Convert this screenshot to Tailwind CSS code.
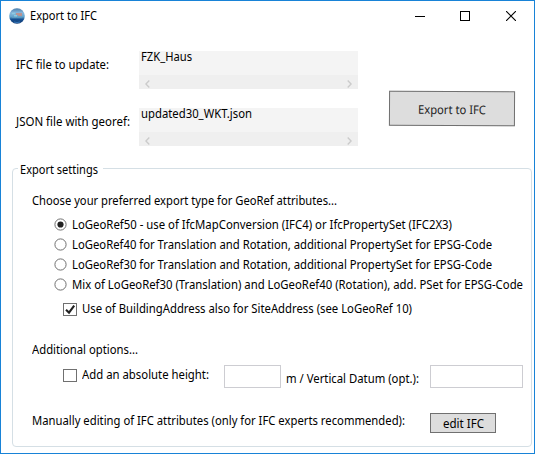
<!DOCTYPE html>
<html lang="en">
<head>
<meta charset="utf-8">
<title>Export to IFC</title>
<script src="https://cdn.jsdelivr.net/npm/@tailwindcss/browser@4"></script>
</head>
<body class="bg-white">
<div class="flex h-[454px] w-[535px] flex-col overflow-hidden border border-[#1883d7] bg-white font-['Noto_Sans','Open_Sans',sans-serif] text-[12px] leading-4 whitespace-nowrap text-black">
  <header class="flex h-[30px] shrink-0 items-center pl-2">
    <svg class="h-4 w-4" viewBox="0 0 16 16">
      <defs>
        <linearGradient id="globe" x1="0" y1="0" x2="0" y2="1"><stop offset="0" stop-color="#487cab"/><stop offset=".3" stop-color="#88b8dc"/><stop offset=".55" stop-color="#63a4cc"/><stop offset=".72" stop-color="#154f91"/><stop offset="1" stop-color="#143b72"/></linearGradient>
      </defs>
      <circle cx="8" cy="8" r="7.8" fill="url(#globe)"/>
      <path d="M3 5.5h3M5 7.8h3" stroke="#8ecbe0" stroke-width="1.5"/>
      <path d="M7 5h6v3H9v-1H7z" fill="#c58d85" opacity=".85"/>
      <path d="M3 9.2q4 .8 10-.3" stroke="#5f9fc4" fill="none"/>
      <path d="M5 14q3 1 6 0" stroke="#3678bb" fill="none"/>
    </svg>
    <div class="ml-[5px] w-[68px]"><span data-w="67" class="inline-block shrink-0 origin-left">Export to IFC</span></div>
    <svg class="ml-[317px] h-[10px] w-[10px]" viewBox="0 0 10 10" shape-rendering="crispEdges"><path d="M0 5.5h10" stroke="#000"/></svg>
    <svg class="ml-[35px] h-[10px] w-[10px]" viewBox="0 0 10 10" shape-rendering="crispEdges"><path d="M.5.5h9v9h-9z" fill="none" stroke="#000"/></svg>
    <svg class="ml-9 h-[10px] w-[10px]" viewBox="0 0 10 10"><path d="M0 0l10 10M10 0L0 10" stroke="#000" stroke-width="1.1"/></svg>
  </header>

  <section class="flex h-[129px] shrink-0">
    <div class="flex w-[138px] flex-col pt-[26px] pl-[15px]">
      <div><span data-w="93" class="inline-block shrink-0 origin-left">IFC file to update:</span></div>
      <div class="mt-[41px]"><span data-w="114" class="inline-block shrink-0 origin-left">JSON file with georef:</span></div>
    </div>
    <div class="flex w-[219px] flex-col gap-[19px] pt-5">
      <div class="flex h-[38px] flex-col bg-[#f4f4f4]">
        <div class="h-6 pl-[2px] leading-[12px]"><span data-w="51" class="inline-block shrink-0 origin-left">FZK_Haus</span></div>
        <div class="flex h-[14px] items-center justify-between bg-[#efefef] px-[6px] pt-[3px]">
          <svg class="h-2 w-[5px]" viewBox="0 0 5 8"><path d="M4.3.5L.9 4l3.4 3.5" fill="none" stroke="#cbcbcb" stroke-width="1.4"/></svg>
          <svg class="h-2 w-[5px]" viewBox="0 0 5 8"><path d="M.7.5L4.1 4 .7 7.5" fill="none" stroke="#cbcbcb" stroke-width="1.4"/></svg>
        </div>
      </div>
      <div class="flex h-[38px] flex-col bg-[#f4f4f4]">
        <div class="h-6 pl-[2px] leading-[12px]"><span data-w="111" class="inline-block shrink-0 origin-left">updated30_WKT.json</span></div>
        <div class="flex h-[14px] items-center justify-between bg-[#efefef] px-[6px] pt-[3px]">
          <svg class="h-2 w-[5px]" viewBox="0 0 5 8"><path d="M4.3.5L.9 4l3.4 3.5" fill="none" stroke="#cbcbcb" stroke-width="1.4"/></svg>
          <svg class="h-2 w-[5px]" viewBox="0 0 5 8"><path d="M.7.5L4.1 4 .7 7.5" fill="none" stroke="#cbcbcb" stroke-width="1.4"/></svg>
        </div>
      </div>
    </div>
    <button class="mt-[60px] ml-[31px] flex h-[35px] w-[126px] rotate-[0.3deg] items-center border border-[#707070] bg-[#ddd] pt-[2px] pl-7 text-[#222]"><span data-w="68" class="inline-block shrink-0 origin-left">Export to IFC</span></button>
  </section>

  <fieldset class="ml-[11px] h-[287px] w-[520px] min-w-0 shrink-0 rounded-[4px] border border-[#d5dfe5]">
    <legend class="ml-[5px] h-4 w-[85px] pl-[2px] leading-5"><span data-w="78" class="inline-block shrink-0 origin-left">Export settings</span></legend>
    <div class="mt-[17px] ml-[19px] h-[23px]"><span data-w="305" class="inline-block shrink-0 origin-left">Choose your preferred export type for GeoRef attributes...</span></div>
    <div class="ml-[41px] flex flex-col gap-1">
      <label class="flex h-4 items-center"><svg class="mr-[5px] h-[13px] w-[13px] shrink-0" viewBox="0 0 13 13"><circle cx="6.5" cy="6.5" r="5.6" fill="#fff" stroke="#707070"/><circle cx="6.5" cy="6.5" r="3.1" fill="#212121"/></svg><span data-w="380" class="inline-block shrink-0 origin-left pt-[2px]">LoGeoRef50 - use of IfcMapConversion (IFC4) or IfcPropertySet (IFC2X3)</span></label>
      <label class="flex h-4 items-center"><svg class="mr-[5px] h-[13px] w-[13px] shrink-0" viewBox="0 0 13 13"><circle cx="6.5" cy="6.5" r="5.6" fill="#fff" stroke="#707070"/></svg><span data-w="420" class="inline-block shrink-0 origin-left pt-[2px]">LoGeoRef40 for Translation and Rotation, additional PropertySet for EPSG-Code</span></label>
      <label class="flex h-4 items-center"><svg class="mr-[5px] h-[13px] w-[13px] shrink-0" viewBox="0 0 13 13"><circle cx="6.5" cy="6.5" r="5.6" fill="#fff" stroke="#707070"/></svg><span data-w="420" class="inline-block shrink-0 origin-left pt-[2px]">LoGeoRef30 for Translation and Rotation, additional PropertySet for EPSG-Code</span></label>
      <label class="flex h-4 items-center"><svg class="mr-[5px] h-[13px] w-[13px] shrink-0" viewBox="0 0 13 13"><circle cx="6.5" cy="6.5" r="5.6" fill="#fff" stroke="#707070"/></svg><span data-w="451" class="inline-block shrink-0 origin-left pt-[2px]">Mix of LoGeoRef30 (Translation) and LoGeoRef40 (Rotation), add. PSet for EPSG-Code</span></label>
    </div>
    <label class="mt-[9px] ml-[50px] flex h-4 items-center"><svg class="mr-[5px] h-[13px] w-[14px] shrink-0" viewBox="0 0 14 13"><path d="M.5.5h13v12H.5z" fill="#fff" stroke="#707070" shape-rendering="crispEdges"/><path d="M3 6.8l3 2.8 5.2-7" fill="none" stroke="#212121" stroke-width="2.1"/></svg><span data-w="330" class="inline-block shrink-0 origin-left">Use of BuildingAddress also for SiteAddress (see LoGeoRef 10)</span></label>
    <div class="mt-[25px] ml-[19px] h-4"><span data-w="106" class="inline-block shrink-0 origin-left">Additional options...</span></div>
    <div class="mt-[7px] ml-[50px] flex h-[23px] items-start">
      <label class="mt-[2px] flex h-4 w-[161px] items-center"><svg class="mr-[5px] h-[13px] w-[14px] shrink-0" viewBox="0 0 14 13" shape-rendering="crispEdges"><path d="M.5.5h13v12H.5z" fill="#fff" stroke="#707070"/></svg><span data-w="127" class="inline-block shrink-0 origin-left">Add an absolute height:</span></label>
      <input aria-label="Absolute height" class="h-[23px] w-[57px] border border-[#cdcdd2] bg-white">
      <div class="mt-[6px] ml-[5px] w-[144px]"><span data-w="133" class="inline-block shrink-0 origin-left">m / Vertical Datum (opt.):</span></div>
      <input aria-label="Vertical datum" class="h-[23px] w-[93px] border border-[#cdcdd2] bg-white">
    </div>
    <div class="mt-[25px] ml-[19px] flex h-5 items-start">
      <div class="w-[398px]"><span data-w="373" class="inline-block shrink-0 origin-left">Manually editing of IFC attributes (only for IFC experts recommended):</span></div>
      <button class="flex h-5 w-[66px] items-center border border-[#707070] bg-[#ddd] pt-[2px] pl-3"><span data-w="41" class="inline-block shrink-0 origin-left">edit IFC</span></button>
    </div>
  </fieldset>
</div>
<script>
  // Fit each label to its nominal width once styles and fonts are ready
  window.addEventListener('load', function () {
    document.querySelectorAll('[data-w]').forEach(function (el) {
      el.style.transform = 'scaleX(' + (el.dataset.w / el.getBoundingClientRect().width) + ')';
    });
  });
</script>
</body>
</html>
